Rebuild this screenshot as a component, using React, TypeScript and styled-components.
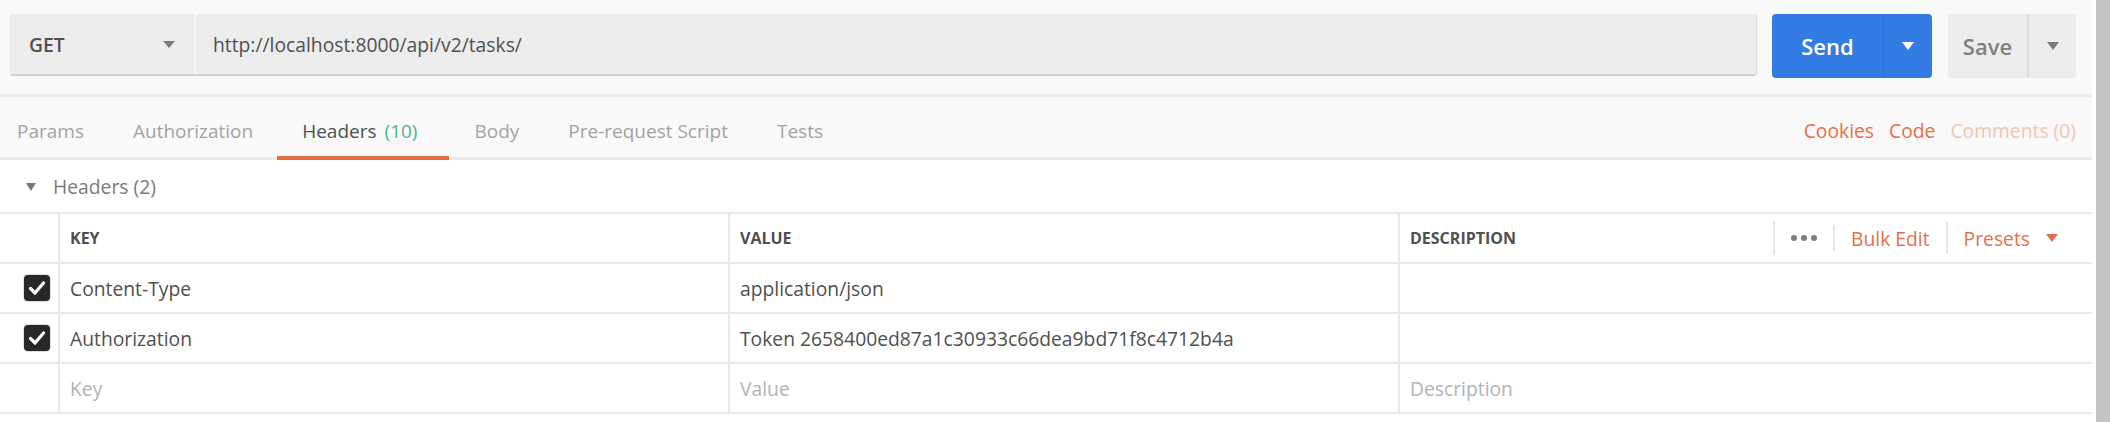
import React from "react";
import styled, { createGlobalStyle } from "styled-components";

const GlobalStyle = createGlobalStyle`
  html, body { margin: 0; padding: 0; background: #ffffff; }
  body { font-family: "Open Sans", "Noto Sans", sans-serif; }
  * { box-sizing: border-box; }
`;

const ORANGE = "#e5704a";
const TEXT = "#505050";
const LINE = "#e8e8e8";
const FS = "19.3px";

const Page = styled.div`
  display: flex;
  width: 2110px;
  height: 422px;
  overflow: hidden;
  background: #ffffff;
`;

const Main = styled.div`
  flex: 1;
  min-width: 0;
  display: flex;
  flex-direction: column;
`;

const ScrollTrack = styled.div`
  width: 14px;
  margin-left: 4px;
  background: #c4c4c4;
`;

const TopBar = styled.div`
  display: flex;
  align-items: flex-start;
  height: 97px;
  padding: 14px 16px 0 10px;
  background: #f9f9f9;
  border-bottom: 3px solid #ececec;
`;

const UrlGroup = styled.div`
  flex: 1;
  display: flex;
  height: 60px;
  box-shadow: 0 3px 1px -1px #d2d2d2, 1px 1px 1px rgba(0, 0, 0, 0.12);
`;

const MethodSelect = styled.div`
  width: 184px;
  display: flex;
  align-items: center;
  justify-content: space-between;
  padding: 0 19px;
  background: #ececec;
  font-size: ${FS};
  font-weight: 600;
  color: ${TEXT};
`;

const UrlInput = styled.div`
  flex: 1;
  display: flex;
  align-items: center;
  margin-left: 2px;
  padding-left: 17px;
  background: #ececec;
  font-size: ${FS};
  color: ${TEXT};
`;

const SplitButton = styled.div<{ $primary?: boolean; $width: number }>`
  display: flex;
  width: ${(p) => p.$width}px;
  height: 64px;
  margin-left: 16px;
  border-radius: 4px;
  overflow: hidden;
  background: ${(p) => (p.$primary ? "#327ce3" : "#ececec")};
  color: ${(p) => (p.$primary ? "#ffffff" : "#808080")};
  font-size: 22px;
  font-weight: 600;
`;

const ButtonLabel = styled.div<{ $width: number }>`
  width: ${(p) => p.$width}px;
  display: flex;
  align-items: center;
  justify-content: center;
`;

const ButtonCaret = styled.div<{ $primary?: boolean }>`
  flex: 1;
  display: flex;
  align-items: center;
  justify-content: center;
  border-left: ${(p) => (p.$primary ? "1px solid #2c6fd2" : "2px solid #dcdcdc")};
`;

const Caret = ({ color, w = 12, h = 7 }: { color: string; w?: number; h?: number }) => (
  <svg width={w} height={h} viewBox={`0 0 ${w} ${h}`} style={{ display: "block" }}>
    <polygon points={`0,0 ${w},0 ${w / 2},${h}`} fill={color} />
  </svg>
);

const TabBar = styled.div`
  display: flex;
  justify-content: space-between;
  height: 63px;
  background: #f9f9f9;
  border-bottom: 3px solid #ebebeb;
`;

const TabList = styled.div`
  display: flex;
  align-items: flex-start;
`;

const Tab = styled.div<{ $active?: boolean; $first?: boolean }>`
  height: 63px;
  padding: 21px 24px 0 ${(p) => (p.$first ? 17 : 25)}px;
  line-height: 26px;
  font-size: 19px;
  color: ${(p) => (p.$active ? TEXT : "#a3a3a3")};
  border-bottom: 4px solid ${(p) => (p.$active ? "#e2703f" : "transparent")};
  white-space: nowrap;
`;

const Count = styled.span`
  margin-left: 8px;
  margin-right: 8px;
  color: #52b383;
`;

const LinkGroup = styled.div`
  display: flex;
  gap: 15px;
  padding: 21px 16px 0 0;
  line-height: 26px;
  font-size: ${FS};
`;

const TextLink = styled.span<{ $muted?: boolean }>`
  color: ${(p) => (p.$muted ? "#f3c4b2" : ORANGE)};
  white-space: nowrap;
`;

const SectionTitle = styled.div`
  display: flex;
  align-items: center;
  gap: 17px;
  height: 52px;
  padding-left: 26px;
  padding-top: 2px;
  font-size: ${FS};
  line-height: 26px;
  color: #7a7a7a;
`;

const Table = styled.div`
  border-top: 2px solid ${LINE};
`;

const Row = styled.div`
  display: grid;
  grid-template-columns: 58px 670px 670px 1fr;
  height: 50px;
  border-bottom: 2px solid ${LINE};
`;

const Cell = styled.div<{ $head?: boolean; $placeholder?: boolean; $divider?: boolean }>`
  display: flex;
  align-items: center;
  padding-left: 10px;
  border-left: ${(p) => (p.$divider ? `2px solid ${LINE}` : "none")};
  font-size: ${(p) => (p.$head ? "16px" : FS)};
  font-weight: ${(p) => (p.$head ? 700 : 400)};
  text-transform: ${(p) => (p.$head ? "uppercase" : "none")};
  color: ${(p) => (p.$placeholder ? "#b3b3b3" : TEXT)};
  white-space: nowrap;
  min-width: 0;
`;

const CheckCell = styled.div`
  display: flex;
  align-items: center;
  padding-left: 24px;
`;

const CheckBox = styled.div`
  width: 26px;
  height: 26px;
  border-radius: 4px;
  background: #282828;
  box-shadow: 0 0 0 1px #e0e0e0;
  display: flex;
  align-items: center;
  justify-content: center;
`;

const HeadCell = styled(Cell)`
  justify-content: space-between;
  padding-right: 34px;
`;

const Actions = styled.div`
  display: flex;
  align-items: center;
  height: 100%;
`;

const ActionSep = styled.div<{ $h: number }>`
  width: 2px;
  height: ${(p) => p.$h}px;
  background: #e6e6e6;
`;

const ActionItem = styled.div`
  display: flex;
  align-items: center;
  gap: 16px;
  padding: 0 16px;
  font-size: ${FS};
  font-weight: 400;
  text-transform: none;
  color: ${ORANGE};
  &:last-child {
    padding-right: 0;
  }
`;

const Dots = styled.div`
  display: flex;
  gap: 4px;
  span {
    width: 6px;
    height: 6px;
    border-radius: 50%;
    background: #7d7d7d;
  }
`;

const Check = () => (
  <svg width="20" height="20" viewBox="0 0 20 20">
    <path d="M3.5 10.5 L8 15 L16.5 5" fill="none" stroke="#ffffff" strokeWidth="3.2" strokeLinecap="round" strokeLinejoin="round" />
  </svg>
);

const rows = [
  { key: "Content-Type", value: "application/json" },
  { key: "Authorization", value: "Token 2658400ed87a1c30933c66dea9bd71f8c4712b4a" },
];

export default function App() {
  return (
    <>
      <GlobalStyle />
      <Page>
        <Main>
          <TopBar>
            <UrlGroup>
              <MethodSelect>
                <span>GET</span>
                <Caret color="#7a7a7a" />
              </MethodSelect>
              <UrlInput>http://localhost:8000/api/v2/tasks/</UrlInput>
            </UrlGroup>
            <SplitButton $primary $width={160}>
              <ButtonLabel $width={111}>Send</ButtonLabel>
              <ButtonCaret $primary>
                <Caret color="#ffffff" h={8} />
              </ButtonCaret>
            </SplitButton>
            <SplitButton $width={128}>
              <ButtonLabel $width={79}>Save</ButtonLabel>
              <ButtonCaret>
                <Caret color="#7a7a7a" h={8} />
              </ButtonCaret>
            </SplitButton>
          </TopBar>
          <TabBar>
            <TabList>
              <Tab $first>Params</Tab>
              <Tab>Authorization</Tab>
              <Tab $active>
                Headers<Count>(10)</Count>
              </Tab>
              <Tab>Body</Tab>
              <Tab>Pre-request Script</Tab>
              <Tab>Tests</Tab>
            </TabList>
            <LinkGroup>
              <TextLink>Cookies</TextLink>
              <TextLink>Code</TextLink>
              <TextLink $muted>Comments (0)</TextLink>
            </LinkGroup>
          </TabBar>
          <SectionTitle>
            <Caret color="#777777" w={10} h={8} />
            <span>Headers (2)</span>
          </SectionTitle>
          <Table>
            <Row>
              <CheckCell />
              <Cell $head $divider>Key</Cell>
              <Cell $head $divider>Value</Cell>
              <HeadCell $head $divider>
                <span>Description</span>
                <Actions>
                  <ActionSep $h={34} />
                  <ActionItem>
                    <Dots>
                      <span />
                      <span />
                      <span />
                    </Dots>
                  </ActionItem>
                  <ActionSep $h={26} />
                  <ActionItem>Bulk Edit</ActionItem>
                  <ActionSep $h={32} />
                  <ActionItem>
                    Presets
                    <Caret color={ORANGE} h={8} />
                  </ActionItem>
                </Actions>
              </HeadCell>
            </Row>
            {rows.map((r) => (
              <Row key={r.key}>
                <CheckCell>
                  <CheckBox>
                    <Check />
                  </CheckBox>
                </CheckCell>
                <Cell $divider>{r.key}</Cell>
                <Cell $divider>{r.value}</Cell>
                <Cell $divider />
              </Row>
            ))}
            <Row>
              <CheckCell />
              <Cell $divider $placeholder>Key</Cell>
              <Cell $divider $placeholder>Value</Cell>
              <Cell $divider $placeholder>Description</Cell>
            </Row>
          </Table>
        </Main>
        <ScrollTrack />
      </Page>
    </>
  );
}
